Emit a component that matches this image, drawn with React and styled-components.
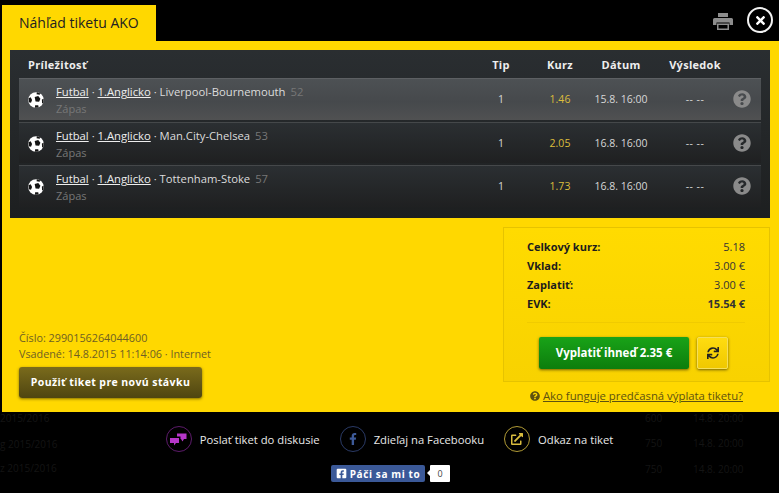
import React from 'react'
import styled, { createGlobalStyle } from 'styled-components'
import { FaTimes, FaQuestionCircle, FaSync, FaFacebookF, FaFacebookSquare, FaExternalLinkAlt } from 'react-icons/fa'

const GlobalStyle = createGlobalStyle`
  html, body { margin: 0; padding: 0; background: #000; }
  body { font-family: "Open Sans", "Liberation Sans", sans-serif; overflow: hidden; }
`

const COLUMNS = '448px 68px 50px 72px 76px 1fr'

const Page = styled.div`
  position: relative;
  width: 779px;
  height: 493px;
  overflow: hidden;
  background: #000;
`
const Modal = styled.div`
  position: relative;
  z-index: 1;
  margin-left: 2px;
  padding-top: 5px;
`
const TopBar = styled.div`
  display: flex;
  justify-content: space-between;
  height: 36px;
`
const Tab = styled.div`
  width: 154px;
  padding-left: 17px;
  box-sizing: border-box;
  background: #ffd800;
  color: #222;
  font-size: 14px;
  line-height: 36px;
`
const Actions = styled.div`
  display: flex;
  align-items: flex-start;
  gap: 14px;
  padding: 2px 6px 0 0;
`
const PrintBtn = styled.div`
  display: flex;
  margin-top: 6px;
`
const CloseBtn = styled.div`
  width: 22px;
  height: 22px;
  border: 2px solid #f2f2f2;
  border-radius: 50%;
  display: flex;
  align-items: center;
  justify-content: center;
  color: #fff;
  font-size: 13px;
`
const Body = styled.div`
  height: 371px;
  box-sizing: border-box;
  padding: 9px 9px 0 8px;
  background: #ffd800;
`
const Panel = styled.div`
  height: 168px;
  box-sizing: border-box;
  padding: 0 9px;
  background: linear-gradient(#2a2e31, #1d1f20);
`
const HeadRow = styled.div`
  display: grid;
  grid-template-columns: ${COLUMNS};
  height: 28px;
  align-items: center;
  color: #eee;
  font-size: 11px;
  font-weight: 700;
  letter-spacing: 0.3px;
`
const HeadCell = styled.div`
  text-align: ${p => (p.$left ? 'left' : 'center')};
  padding-left: ${p => (p.$left ? '9px' : '0')};
`
const Row = styled.div`
  display: grid;
  grid-template-columns: ${COLUMNS};
  height: 41.5px;
  margin-bottom: 2px;
  align-items: center;
  color: #d8d8d8;
  font-size: 10.5px;
  background: ${p => (p.$active
    ? 'linear-gradient(#4d5154, #46494c 55%, #505152)'
    : 'linear-gradient(#2b2f32, #1f2021)')};
  border-top: 1px solid ${p => (p.$active ? '#5d6063' : '#45484a')};
  box-sizing: border-box;
`
const Match = styled.div`
  display: flex;
  align-items: center;
  gap: 12px;
  padding: 2px 0 0 9px;
`
const MatchText = styled.div`
  display: flex;
  flex-direction: column;
  gap: 2px;
  line-height: 15px;
  color: #dcdcdc;
  font-size: 11.25px;
`
const MatchLink = styled.span`
  color: #eee;
  text-decoration: underline;
`
const MatchNum = styled.span`
  color: #777;
  margin-left: 5px;
`
const MatchType = styled.div`
  color: #777;
  font-size: 11px;
`
const Cell = styled.div`
  text-align: center;
  color: ${p => (p.$odds ? '#dcbd3c' : 'inherit')};
  letter-spacing: ${p => (p.$dim ? '0.5px' : '0')};
`
const HelpCell = styled.div`
  color: #8a8a8a;
  font-size: 18px;
  line-height: 1;
  display: flex;
`
const Lower = styled.div`
  display: flex;
  justify-content: space-between;
  margin-right: -9px;
  height: 194px;
`
const LeftCol = styled.div`
  display: flex;
  flex-direction: column;
  justify-content: flex-end;
  padding: 0 0 14px 9px;
  color: #6e6024;
  font-size: 10.8px;
  line-height: 16px;
`
const ReuseBtn = styled.div`
  width: 183px;
  height: 31px;
  margin-top: 5px;
  border-radius: 3px;
  background: linear-gradient(#7a6b1c, #4f4510);
  box-shadow: 0 1px 3px rgba(0, 0, 0, 0.5);
  color: #fff;
  font-size: 10.5px;
  font-weight: 700;
  letter-spacing: 0.4px;
  line-height: 31px;
  text-align: center;
`
const RightCol = styled.div`
  width: 267px;
  margin: 9px 9px 0 0;
  display: flex;
  flex-direction: column;
`
const Summary = styled.div`
  height: 155px;
  box-sizing: border-box;
  padding: 9px 24px 0 23px;
  border: 1px solid #e6c300;
  background: linear-gradient(#ffdb00, #f8d200);
`
const SumRow = styled.div`
  display: flex;
  justify-content: space-between;
  height: 19px;
  line-height: 19px;
  font-size: 11px;
  color: #333;
  font-weight: ${p => (p.$strong ? 700 : 400)};
`
const SumLabel = styled.span`
  font-weight: 700;
  color: #1c1c1c;
`
const SumDivider = styled.div`
  height: 1px;
  margin-top: 9px;
  background: #f0cb00;
`
const PayRow = styled.div`
  display: flex;
  gap: 8px;
  margin: 14px 0 0 12px;
`
const PayBtn = styled.div`
  width: 150px;
  height: 32px;
  border-radius: 2px;
  background: linear-gradient(#19a318, #0c7d0c);
  box-shadow: 0 1px 3px rgba(0, 0, 0, 0.55);
  color: #fff;
  font-size: 11.5px;
  font-weight: 700;
  line-height: 32px;
  text-align: center;
`
const RefreshBtn = styled.div`
  width: 31px;
  height: 32px;
  border-radius: 2px;
  border: 1px solid #f5df5a;
  box-sizing: border-box;
  background: linear-gradient(#ffdc10, #f0c800);
  box-shadow: 0 1px 3px rgba(0, 0, 0, 0.55);
  color: #222;
  font-size: 12px;
  display: flex;
  align-items: center;
  justify-content: center;
`
const HowLink = styled.div`
  display: flex;
  align-items: center;
  justify-content: flex-end;
  gap: 3px;
  margin: 6px 27px 0 0;
  color: #5e5210;
  font-size: 11.35px;
  line-height: 16px;
`
const HowText = styled.span`
  text-decoration: underline;
`
const Footer = styled.div`
  position: relative;
  z-index: 1;
  display: flex;
  flex-direction: column;
  align-items: center;
`
const ShareRow = styled.div`
  display: flex;
  align-items: center;
  height: 26px;
  margin-top: 14px;
  gap: 20px;
`
const ShareItem = styled.div`
  display: flex;
  align-items: center;
  gap: 8px;
  color: #e8e8e8;
  font-size: 11.25px;
`
const ShareIcon = styled.div`
  width: 26px;
  height: 26px;
  box-sizing: border-box;
  border-radius: 50%;
  border: 1.5px solid ${p => p.$tone};
  color: ${p => p.$bright};
  display: flex;
  align-items: center;
  justify-content: center;
  font-size: 12px;
`
const LikeRow = styled.div`
  display: flex;
  align-items: center;
  margin: 13px 0 0 2px;
`
const LikeBtn = styled.div`
  width: 94px;
  height: 17px;
  display: flex;
  align-items: center;
  justify-content: center;
  gap: 3px;
  border-radius: 2px;
  background: #3b5998;
  color: #fff;
  font-size: 10px;
  font-weight: 700;
  letter-spacing: 0.6px;
`
const LikeCount = styled.div`
  position: relative;
  width: 20px;
  height: 17px;
  margin-left: 5px;
  background: #fff;
  color: #444;
  font-size: 9px;
  line-height: 17px;
  text-align: center;
  border-radius: 1px;
  &::before {
    content: '';
    position: absolute;
    left: -3px;
    top: 5px;
    border-style: solid;
    border-width: 3px 3px 3px 0;
    border-color: transparent #fff transparent transparent;
  }
`
const Ghost = styled.div`
  position: absolute;
  left: ${p => p.$x}px;
  top: ${p => p.$y}px;
  color: #141414;
  font-size: 10px;
  line-height: 14px;
  white-space: nowrap;
`

const Ball = () => (
  <svg width="16" height="16" viewBox="0 0 18 18">
    <circle cx="9" cy="9" r="8.8" fill="#fff" />
    <path d="M7.5 5.5 L11.5 4.5 L14 7.5 L12.5 11 L8.5 10.8 Z" fill="#141414" />
    <path d="M0.6 7 L3 5.8 L4.6 9 L3.4 12.2 L1 11.4 Z" fill="#141414" />
    <path d="M10 0.4 L14 1.8 L13 3 L9.6 2.6 Z" fill="#141414" />
    <path d="M15.6 8.5 L17.6 7.6 L17.4 12 L15.8 12.8 Z" fill="#141414" />
    <path d="M8 15 L11.5 15 L12 17.4 L7.8 17.6 Z" fill="#141414" />
  </svg>
)

const Printer = () => (
  <svg width="20" height="17" viewBox="0 0 20 17" fill="#8d8d8d">
    <path d="M5 0 h10 v4 h-10 z" />
    <path d="M1.5 5 h17 a1.5 1.5 0 0 1 1.5 1.5 v5.5 h-3.5 v-2.5 h-13 v2.5 h-3.5 v-5.5 a1.5 1.5 0 0 1 1.5 -1.5 z" />
    <path d="M4 10.5 h12 v6.5 h-12 z M5.5 12 v3.5 h9 v-3.5 z" fillRule="evenodd" />
  </svg>
)

const Bubbles = () => (
  <svg width="17" height="13" viewBox="0 0 17 13" fill="#b637c9">
    <path d="M0 5 h9 v5 h-3 l-2 2.5 v-2.5 h-4 z" />
    <path d="M7 0.5 h9.5 v5.5 h-2.5 l-1.5 2.5 l-1.5 -2.5 h-0.5 v-2.5 h-3.5 z" />
  </svg>
)

const matches = [
  { name: 'Liverpool-Bournemouth', num: 52, odds: '1.46', date: '15.8. 16:00', active: true },
  { name: 'Man.City-Chelsea', num: 53, odds: '2.05', date: '16.8. 16:00' },
  { name: 'Tottenham-Stoke', num: 57, odds: '1.73', date: '16.8. 16:00' },
]

const ghosts = [
  { x: 0, y: 411, text: '2015/2016' },
  { x: 0, y: 437, text: 'g 2015/2016' },
  { x: 0, y: 461, text: 'z 2015/2016' },
  { x: 645, y: 411, text: '600' },
  { x: 693, y: 411, text: '14.8. 20:00' },
  { x: 645, y: 436, text: '750' },
  { x: 693, y: 436, text: '14.8. 20:00' },
  { x: 645, y: 462, text: '750' },
  { x: 693, y: 462, text: '14.8. 20:00' },
]

const App = () => {
  return (
    <Page>
      <GlobalStyle />
      {ghosts.map((g, i) => <Ghost key={i} $x={g.x} $y={g.y}>{g.text}</Ghost>)}
      <Modal>
        <TopBar>
          <Tab>Náhľad tiketu AKO</Tab>
          <Actions>
            <PrintBtn><Printer /></PrintBtn>
            <CloseBtn><FaTimes /></CloseBtn>
          </Actions>
        </TopBar>
        <Body>
          <Panel>
            <HeadRow>
              <HeadCell $left>Príležitosť</HeadCell>
              <HeadCell>Tip</HeadCell>
              <HeadCell>Kurz</HeadCell>
              <HeadCell>Dátum</HeadCell>
              <HeadCell>Výsledok</HeadCell>
            </HeadRow>
            {matches.map(m => (
              <Row key={m.num} $active={m.active}>
                <Match>
                  <Ball />
                  <MatchText>
                    <div>
                      <MatchLink>Futbal</MatchLink> · <MatchLink>1.Anglicko</MatchLink> · {m.name}
                      <MatchNum>{m.num}</MatchNum>
                    </div>
                    <MatchType>Zápas</MatchType>
                  </MatchText>
                </Match>
                <Cell>1</Cell>
                <Cell $odds>{m.odds}</Cell>
                <Cell>{m.date}</Cell>
                <Cell $dim>-- --</Cell>
                <HelpCell><FaQuestionCircle /></HelpCell>
              </Row>
            ))}
          </Panel>
          <Lower>
            <LeftCol>
              <div>Číslo: 2990156264044600</div>
              <div>Vsadené: 14.8.2015 11:14:06 · Internet</div>
              <ReuseBtn>Použiť tiket pre novú stávku</ReuseBtn>
            </LeftCol>
            <RightCol>
              <Summary>
                <SumRow><SumLabel>Celkový kurz:</SumLabel><span>5.18</span></SumRow>
                <SumRow><SumLabel>Vklad:</SumLabel><span>3.00 €</span></SumRow>
                <SumRow><SumLabel>Zaplatiť:</SumLabel><span>3.00 €</span></SumRow>
                <SumRow $strong><SumLabel>EVK:</SumLabel><span>15.54 €</span></SumRow>
                <SumDivider />
                <PayRow>
                  <PayBtn>Vyplatiť ihneď 2.35 €</PayBtn>
                  <RefreshBtn><FaSync /></RefreshBtn>
                </PayRow>
              </Summary>
              <HowLink>
                <FaQuestionCircle size={10} />
                <HowText>Ako funguje predčasná výplata tiketu?</HowText>
              </HowLink>
            </RightCol>
          </Lower>
        </Body>
      </Modal>
      <Footer>
        <ShareRow>
          <ShareItem>
            <ShareIcon $tone="#5d1b6b" $bright="#b637c9"><Bubbles /></ShareIcon>
            Poslať tiket do diskusie
          </ShareItem>
          <ShareItem>
            <ShareIcon $tone="#2a3a66" $bright="#3d5a98"><FaFacebookF /></ShareIcon>
            Zdieľaj na Facebooku
          </ShareItem>
          <ShareItem>
            <ShareIcon $tone="#b09a35" $bright="#d9bc3e"><FaExternalLinkAlt /></ShareIcon>
            Odkaz na tiket
          </ShareItem>
        </ShareRow>
        <LikeRow>
          <LikeBtn><FaFacebookSquare size={11} />Páči sa mi to</LikeBtn>
          <LikeCount>0</LikeCount>
        </LikeRow>
      </Footer>
    </Page>
  )
}

export default App
